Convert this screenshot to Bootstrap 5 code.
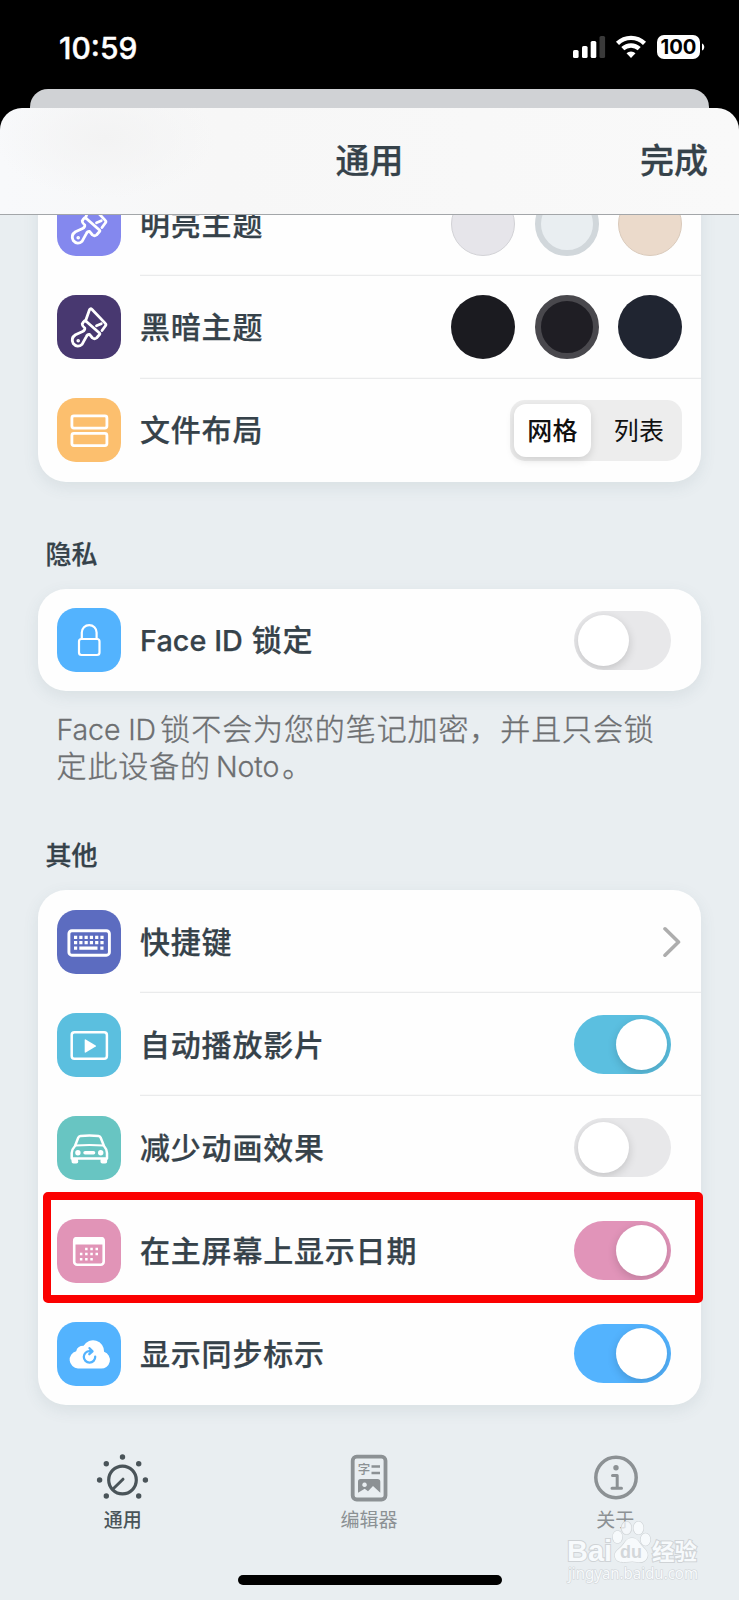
<!DOCTYPE html>
<html lang="zh-CN">
<head>
<meta charset="utf-8">
<meta name="viewport" content="width=device-width, initial-scale=1">
<title>通用</title>
<link href="https://cdn.jsdelivr.net/npm/bootstrap@5.3.0/dist/css/bootstrap.min.css" rel="stylesheet">
<style>
  body { background:#000; font-family:Inter,"Noto Sans CJK SC",sans-serif; color:#36424a; height:1600px; overflow:hidden; line-height:1.2; }
  .phone { width:739px; height:1600px; }
  .status { height:89px; padding:0 34px 0 59px; color:#fff; }
  .clock { font-size:30px; font-weight:500; -webkit-text-stroke:.4px #fff; margin-top:6px; }
  .back-sheet { height:19px; margin:0 30px; background:#d0d2d5; border-radius:18px 18px 0 0; }
  .sheet { background:#e9eef1; }
  .corner { background:#000; }
  .sheet-head { height:107px; border-bottom:1px solid #a3a6a9; border-radius:22px 22px 0 0; background:radial-gradient(ellipse 110px 60px at 105px 30px,#f3f3f3,transparent),linear-gradient(90deg,#f8f9fb,#f7f7f7 30%,#f9f9f9); font-size:34px; font-weight:500; padding:0 31px; -webkit-text-stroke:.25px #36424a; }
  .content { height:1209px; overflow:hidden; padding:0 38px; }
  .panel { background:#fefefe; border-radius:28px; box-shadow:0 5px 16px rgba(70,95,110,.1); width:663px; }
  .first { margin-top:-42.4px; }
  .item { height:103px; padding-left:19px; }
  .tile { width:64px; height:64px; border-radius:19px; flex:none; }
  .tile svg { display:block; }
  .item-body { margin-left:19px; height:103px; box-shadow:inset 0 -1.2px #eaebec; font-size:30px; letter-spacing:.8px; font-weight:500; }
  .item:last-child .item-body { box-shadow:none; }
  .item-body > .me-auto { -webkit-text-stroke:.25px #36424a; }
  .latin { letter-spacing:.05px; font-size:28.8px; }
  .latin, .clock { font-feature-settings:"calt"; }
  .group-title { font-size:26px; font-weight:500; line-height:36px; padding-left:7.5px; -webkit-text-stroke:.25px #36424a; }
  .swatch { width:64px; height:64px; border-radius:50%; }
  .swatches { gap:19.5px; margin-right:19px; }
  .seg { width:172px; height:61px; border-radius:15px; background:#ededed; padding:4px; margin-right:19px; font-size:25px; letter-spacing:.2px; color:#111; }
  .seg span { height:53px; width:77px; border-radius:12px; padding-top:2px; }
  .seg .on { background:#fff; box-shadow:0 3px 8px rgba(0,0,0,.13); }
  .seg .off { font-weight:400; width:87px; padding-left:9px; }
  .toggle { width:97px; height:59px; border-radius:30px; background:#e8e8ea; padding:4px; margin-right:30px; overflow:hidden; }
  .toggle i { width:51px; height:51px; border-radius:50%; background:#fff; box-shadow:0 3px 10px rgba(0,0,0,.16); }
  .note { font-size:30px; line-height:36px; letter-spacing:.9px; color:#6d6f71; font-weight:300; -webkit-text-stroke:.4px #6d6f71; padding-left:18.5px; white-space:nowrap; }
  .note .en { font-size:28.5px; letter-spacing:-.1px; margin-right:-5px; -webkit-text-stroke:.3px #6d6f71; }
  .note .word { margin:0 0 0 5px; }
  .note .stop { margin-left:3px; }
  .marker { left:43px; top:1192px; width:660px; height:111px; border:8px solid #fb0000; border-radius:5px; }
  .tabs { height:176px; }
  .tabs .tab { width:33.333%; font-size:19px; font-weight:400; color:#8c9194; }
  .tabs .tab.active { color:#4a5459; font-weight:500; }
  .tab div { margin:7px 1px 0 0; }
  .homebar { width:264px; height:10px; border-radius:5px; background:#000; left:238px; top:1575px; }
  .wm { left:560px; top:1515px; }
</style>
</head>
<body>
<div class="phone position-relative">
  <header class="status d-flex align-items-center justify-content-between">
    <span class="clock">10:59</span>
    <svg width="132" height="30" viewBox="573 32 132 30" fill="#fff" style="margin-top:5px">
      <rect x="573" y="50" width="5.6" height="8" rx="1.6"/><rect x="582" y="46" width="5.6" height="12" rx="1.6"/><rect x="590.7" y="41" width="5.6" height="17" rx="1.6"/><rect x="599.5" y="36" width="5.6" height="22" rx="1.6" fill="#3a3a3a"/>
      <g fill="none" stroke="#fff" stroke-width="4.400"><path d="M617.500 43.300a19.500 19.500 0 0 1 27 0"/><path d="M622.800 48.700a12 12 0 0 1 16.400 0"/></g>
      <path d="M626.500 53.200a6.700 6.700 0 0 1 9 0L631 58z"/>
      <rect x="657" y="35" width="43" height="24" rx="7"/><path d="M702 43.500c3 1 3 6 0 7z"/>
      <text x="678.500" y="54.200" text-anchor="middle" font-family="Inter" font-weight="700" font-size="20" fill="#000" textLength="36" lengthAdjust="spacingAndGlyphs">100</text>
    </svg>
  </header>
  <div class="back-sheet"></div>
  <div class="corner">
    <div class="sheet-head d-flex align-items-center">
      <span class="col"></span><span>通用</span><span class="col text-end">完成</span>
    </div>
  </div>
  <div class="sheet">
    <main class="content">
      <section class="panel first">
        <div class="item d-flex align-items-center">
          <div class="tile" style="background:#8488ee"><svg width="64" height="64" viewBox="0 0 64 64"><use href="#brush"/></svg></div>
          <div class="item-body d-flex align-items-center flex-grow-1"><span class="me-auto">明亮主题</span>
            <div class="swatches d-flex"><span class="swatch" style="background:#e6e5ea;border:1px solid #d2d2d6"></span><span class="swatch" style="background:#e9eef1;border:6px solid #d1d7db"></span><span class="swatch" style="background:#ebdacb;border:1px solid #dacabb"></span></div></div>
        </div>
        <div class="item d-flex align-items-center">
          <div class="tile" style="background:#483870"><svg width="64" height="64" viewBox="0 0 64 64"><g id="brush" fill="none" stroke="#fff" stroke-width="2.800" stroke-linejoin="round" stroke-linecap="round"><path d="M28.500 26 32.500 14.800Q33.500 13 34.800 14.200L48.300 28.400Q49.500 29.600 48.300 31L45 35.500"/><path d="M39.500 30.800 44.300 28.800"/><path d="M28.500 25.800Q27.500 25.500 26.400 27L25.200 29Q25 31 27.800 33.200Q28 35.500 25.600 36.500L18.500 39.800Q13.500 43 16.200 48.500Q20.500 53.500 25.200 49.200L29.200 41.800Q30.500 39 32.500 39.400L35.500 43Q37.500 44.500 39.500 43L42.600 39.500Q43.300 38.800 42.400 38Z"/><circle cx="21.200" cy="45.800" r="1" stroke-width="1.600"/></g></svg></div>
          <div class="item-body d-flex align-items-center flex-grow-1"><span class="me-auto">黑暗主题</span>
            <div class="swatches d-flex"><span class="swatch" style="background:#1b1b20"></span><span class="swatch" style="background:#1f1e24;border:6px solid #49484d"></span><span class="swatch" style="background:#202531"></span></div></div>
        </div>
        <div class="item d-flex align-items-center">
          <div class="tile" style="background:#fcbf6e"><svg width="64" height="64" fill="none" stroke="#fff" stroke-width="2.800"><rect x="14.900" y="17.900" width="35" height="12.200" rx="2"/><rect x="14.900" y="35.400" width="35" height="12.200" rx="2"/></svg></div>
          <div class="item-body d-flex align-items-center flex-grow-1"><span class="me-auto">文件布局</span>
            <div class="seg d-flex"><span class="on d-flex align-items-center justify-content-center">网格</span><span class="off d-flex align-items-center justify-content-center">列表</span></div></div>
        </div>
      </section>

      <h2 class="group-title mb-0" style="margin-top:55.400px">隐私</h2>
      <section class="panel" style="margin-top:16px">
        <div class="item d-flex align-items-center" style="height:102px">
          <div class="tile" style="background:#53b3fe"><svg width="64" height="64" fill="none" stroke="#fff" stroke-width="2.200"><rect x="22" y="31" width="20.500" height="16" rx="2.500"/><path d="M24.800 31v-6.500a7.400 7.400 0 0 1 14.800 0V31"/></svg></div>
          <div class="item-body d-flex align-items-center flex-grow-1"><span class="me-auto"><span class="latin">Face ID</span> 锁定</span><div class="toggle d-flex"><i></i></div></div>
        </div>
      </section>
      <p class="note mb-0" style="margin-top:20px"><span class="en">Face ID</span> 锁不会为您的笔记加密，并且只会锁<br>定此设备的<span class="en word">Noto</span><span class="stop">。</span></p>

      <h2 class="group-title mb-0" style="margin-top:53px">其他</h2>
      <section class="panel" style="margin-top:16px">
        <div class="item d-flex align-items-center">
          <div class="tile" style="background:#5c6cc0"><svg width="64" height="64"><rect x="11.900" y="20.700" width="40.500" height="24.500" rx="3" fill="none" stroke="#fff" stroke-width="2.900"/><g stroke="#fff" stroke-width="3.200"><path d="M17 27.300h31M17 32.700h31" stroke-dasharray="3.200 2.080"/><path d="M17 38.200h3.200M22.300 38.200h18.200M43.300 38.200h3.200"/></g></svg></div>
          <div class="item-body d-flex align-items-center flex-grow-1"><span class="me-auto">快捷键</span><svg width="18" height="32" viewBox="0 0 18 32" fill="none" stroke="#adadad" stroke-width="3.600" stroke-linecap="round" stroke-linejoin="round" style="margin-right:20px"><path d="M2 2.800 15.500 16 2 29.200"/></svg></div>
        </div>
        <div class="item d-flex align-items-center">
          <div class="tile" style="background:#5bbfdf"><svg width="64" height="64"><rect x="14.700" y="19.300" width="35.200" height="26.500" rx="2.800" fill="none" stroke="#fff" stroke-width="2.500"/><path d="M27.700 27v12q0 1 1 .5l10-6q.8-.5 0-1l-10-6q-1-.5-1 .5z" fill="#fff"/></svg></div>
          <div class="item-body d-flex align-items-center flex-grow-1"><span class="me-auto">自动播放影片</span><div class="toggle d-flex justify-content-end" style="background:#5bbfe0"><i></i></div></div>
        </div>
        <div class="item d-flex align-items-center">
          <div class="tile" style="background:#68c5c2"><svg width="64" height="64" fill="none" stroke="#fff" stroke-width="2.500" stroke-linejoin="round"><path d="M18 30 21.300 21.500Q22 20.200 23.500 20 32.400 19.200 41.500 20 43 20.200 43.600 21.500L47 30Q50 33.500 50 37V42.500H14.700V37Q14.700 33.500 18 30z"/><path d="M18.500 29.600Q32.400 28.600 46.500 29.600" stroke-width="2"/><path d="M17.800 42.500v2.500M46.900 42.500v2.500" stroke-width="6.500" stroke-linecap="butt"/><path d="M16.500 45.500h2.800M45.400 45.500h2.800" stroke-width="4" stroke-linecap="round"/><g fill="#fff" stroke="none"><circle cx="20.900" cy="36.700" r="2.700"/><circle cx="43.700" cy="36.700" r="2.700"/><rect x="26.300" y="34.900" width="12" height="3.700" rx="1.800"/></g></svg></div>
          <div class="item-body d-flex align-items-center flex-grow-1"><span class="me-auto">减少动画效果</span><div class="toggle d-flex"><i></i></div></div>
        </div>
        <div class="item d-flex align-items-center">
          <div class="tile" style="background:#e194b7"><svg width="64" height="64"><rect x="17.200" y="19.200" width="29.500" height="26.500" rx="3" fill="none" stroke="#fff" stroke-width="2.600"/><path d="M16.200 25.500V21q0-3 3-3h25.500q3 0 3 3v4.500z" fill="#fff"/><g fill="none" stroke="#fff" stroke-width="2.500" stroke-dasharray="2.500 2.700"><path d="M28.100 30h13.200M22.900 35.100h18.400M22.900 40.300h13"/></g></svg></div>
          <div class="item-body d-flex align-items-center flex-grow-1"><span class="me-auto">在主屏幕上显示日期</span><div class="toggle d-flex justify-content-end" style="background:#e194b9"><i></i></div></div>
        </div>
        <div class="item d-flex align-items-center">
          <div class="tile" style="background:#53b3fe"><svg width="64" height="64"><path d="M21 46.500a8.800 8.800 0 0 1-1.800-17.300q1-5.500 7.400-5.500a11 11 0 0 1 20.500 6.100 8.600 8.600 0 0 1-3.600 16.700z" fill="#fff"/><g fill="none" stroke="#53b3fe" stroke-width="2.300" stroke-linecap="round" stroke-linejoin="round"><path d="M38.200 34.700a5.700 5.700 0 1 1-5.500-5.500h2.500M32.500 26.200l3 3.100-3.200 2.900"/></g></svg></div>
          <div class="item-body d-flex align-items-center flex-grow-1"><span class="me-auto">显示同步标示</span><div class="toggle d-flex justify-content-end" style="background:#53b3fe"><i></i></div></div>
        </div>
      </section>
    </main>
    <nav class="tabs d-flex text-center">
      <div class="tab active" style="padding-top:28px"><svg class="d-block mx-auto" width="54" height="50" viewBox="-26.500 -28 54 50"><circle r="13.800" fill="none" stroke="currentColor" stroke-width="3.200"/><path d="M.5-.8-9 8.500" stroke="currentColor" stroke-width="3" stroke-linecap="round"/><g fill="currentColor"><circle cy="-23" r="2.700"/><circle cx="-16.200" cy="-16.200" r="2.700"/><circle cx="16.200" cy="-16.200" r="2.700"/><circle cx="-22.900" r="2.700"/><circle cx="22.900" r="2.700"/><circle cx="-16.200" cy="16" r="2.700"/><circle cx="16.200" cy="16" r="2.700"/></g></svg><div style="margin-top:8px">通用</div></div>
      <div class="tab" style="padding-top:29px"><svg class="d-block mx-auto" width="38" height="50" viewBox="0 0 38 50"><rect x="2.700" y="3.700" width="32.800" height="42.800" rx="4" fill="none" stroke="currentColor" stroke-width="3.800"/><text x="7.800" y="21" font-size="12.500" font-weight="500" font-family="Noto Sans CJK SC" fill="currentColor">字</text><path d="M21.500 13.500h8.500M21.500 20h8.500" stroke="currentColor" stroke-width="2.400"/><path fill="currentColor" fill-rule="evenodd" d="M10.500 26h17q2.800 0 2.800 2.800v11L23 33l-5 5.300-3.300-2.500-6.700 4V28.800q0-2.800 2.500-2.800zM14.500 29.500a2.300 2.300 0 1 0 .1 0z"/></svg><div>编辑器</div></div>
      <div class="tab" style="padding-top:29px"><svg class="d-block mx-auto" width="46" height="50" viewBox="0 0 46 50"><circle cx="23" cy="24.500" r="20.200" fill="none" stroke="currentColor" stroke-width="3.500"/><circle cx="23" cy="14.800" r="2.700" fill="currentColor"/><path d="M19.500 22.500h4.700v12.800M19 35.300h9.500" fill="none" stroke="currentColor" stroke-width="3" stroke-linecap="round" stroke-linejoin="round"/></svg><div>关于</div></div>
    </nav>
  </div>
  <div class="marker position-absolute"></div>
  <div class="homebar position-absolute"></div>
  <svg class="wm position-absolute" width="150" height="70" viewBox="560 1515 150 70">
    <g fill="#f7fafc" stroke="#cfd3d6" stroke-width="1.200" paint-order="stroke">
      <ellipse cx="626.500" cy="1528" rx="5" ry="6.500" fill-opacity=".75"/><ellipse cx="638.500" cy="1528" rx="5" ry="6.500"/><ellipse cx="617.500" cy="1537" rx="4.800" ry="6.200"/><ellipse cx="645.500" cy="1539.500" rx="4.800" ry="6.200"/>
      <path d="M632 1538c6 0 7 5 11 9s6 7 4 11-6 5-10 4-7-.500-11 0-10 0-11-5 2-6 6-10 5-9 11-9z"/>
      <g font-family="Liberation Sans" font-weight="700" stroke-width="2">
        <text x="567" y="1561" font-size="29" textLength="45" lengthAdjust="spacingAndGlyphs">Bai</text>
        <text x="652" y="1560" font-family="Noto Sans CJK SC" font-size="22.500">经验</text>
        <text x="568" y="1579" font-family="Noto Sans" font-weight="400" font-size="16.500" textLength="130" lengthAdjust="spacingAndGlyphs" stroke-width="1.200">jingyan.baidu.com</text>
      </g>
    </g>
    <text x="620" y="1558" font-family="Liberation Sans" font-weight="700" font-size="19" fill="#d3d7da" textLength="22" lengthAdjust="spacingAndGlyphs">du</text>
  </svg>
</div>
<script src="https://cdn.jsdelivr.net/npm/bootstrap@5.3.0/dist/js/bootstrap.bundle.min.js"></script>
</body>
</html>
